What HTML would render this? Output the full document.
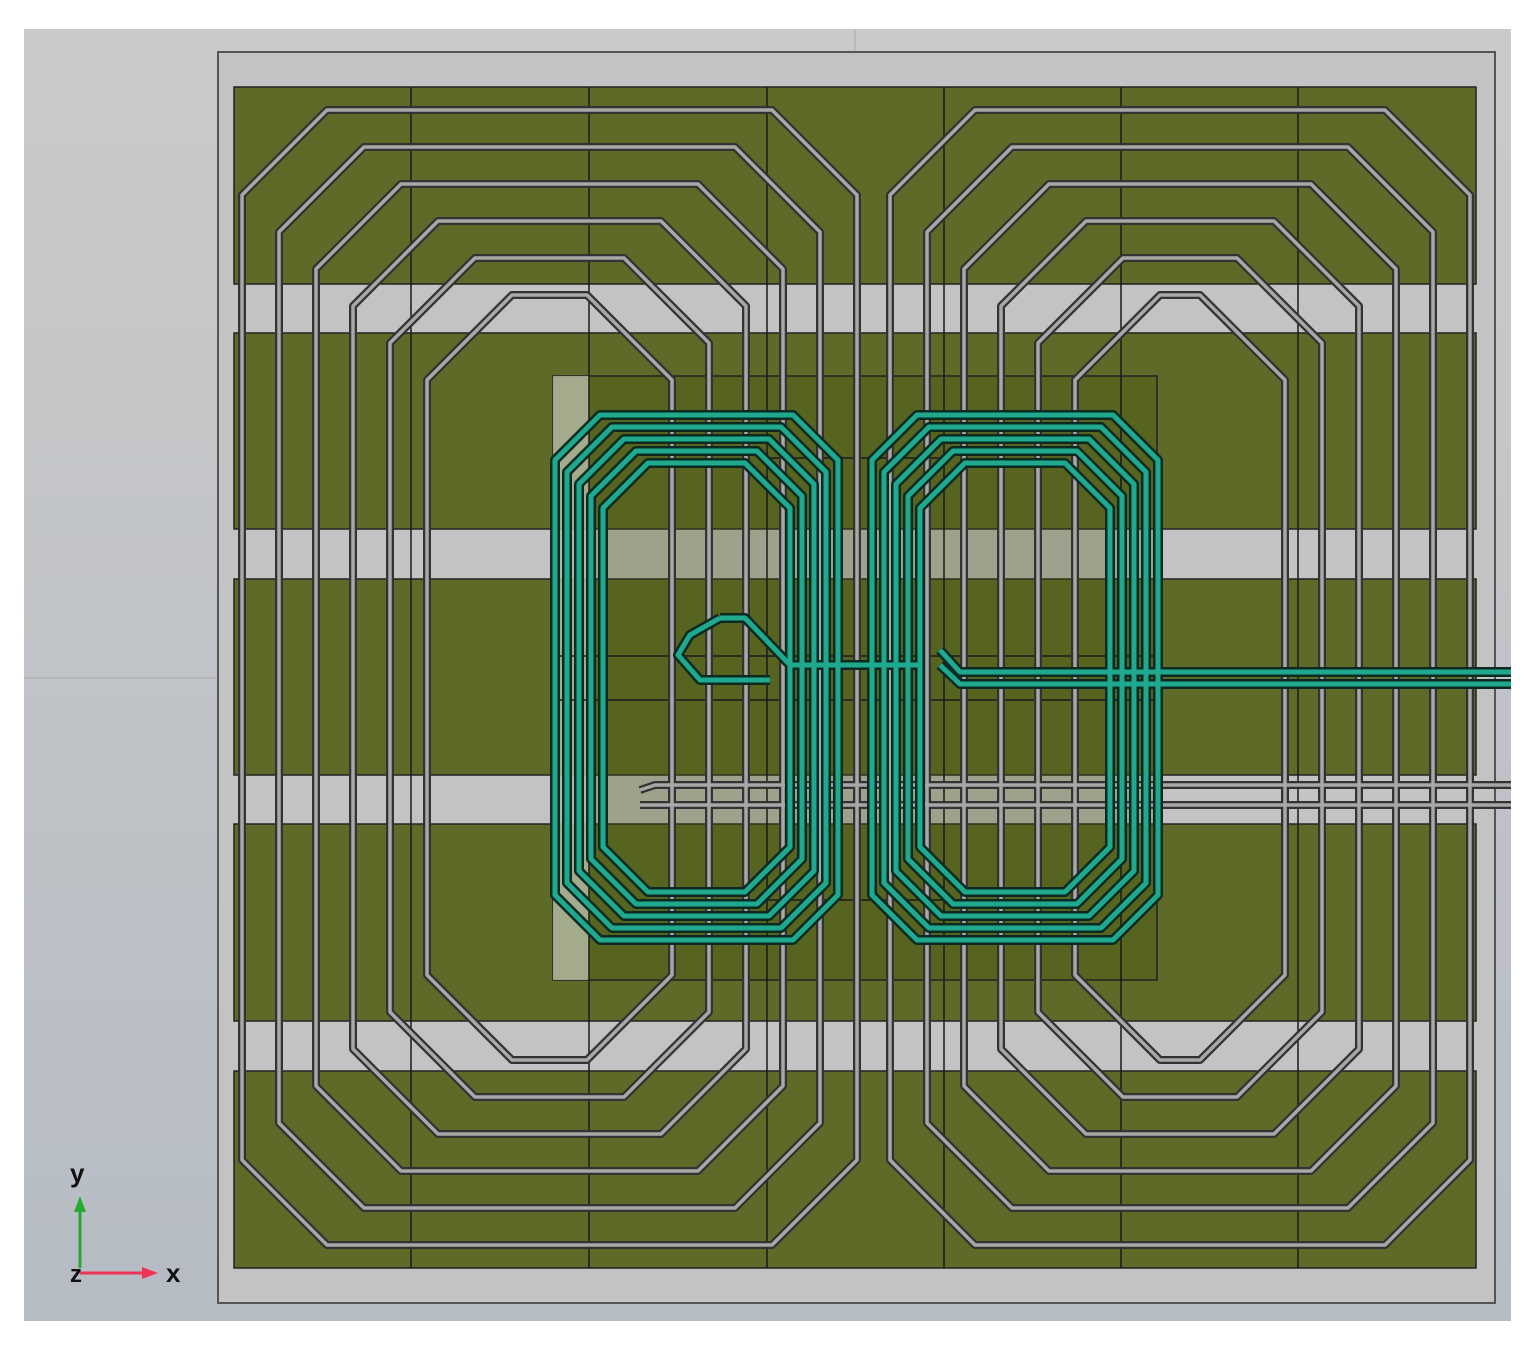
<!DOCTYPE html>
<html><head><meta charset="utf-8"><style>html,body{margin:0;padding:0;background:#fff}svg{display:block}</style></head>
<body>
<svg width="1538" height="1353" viewBox="0 0 1538 1353" xmlns="http://www.w3.org/2000/svg">
<defs>
<linearGradient id="bg" x1="0" y1="0" x2="0" y2="1"><stop offset="0" stop-color="#cacaca"/><stop offset="1" stop-color="#b6bcc4"/></linearGradient>
</defs>
<rect x="24" y="29" width="1487" height="1292" fill="url(#bg)"/>
<line x1="855" y1="29" x2="855" y2="52" stroke="#aaa"/>
<line x1="24" y1="678" x2="218" y2="678" stroke="#aaa"/>
<rect x="218" y="52" width="1277" height="1251" fill="#c3c3c3" stroke="#555" stroke-width="2"/>
<g fill="#5e6a27" stroke="#222" stroke-width="1.5">
<rect x="234" y="87" width="1242" height="197"/>
<rect x="234" y="333" width="1242" height="196"/>
<rect x="234" y="579" width="1242" height="196"/>
<rect x="234" y="824" width="1242" height="197"/>
<rect x="234" y="1071" width="1242" height="197"/>
</g>
<rect x="553" y="376" width="604" height="604" fill="#4a5712" fill-opacity="0.3" stroke="#222" stroke-width="1.5"/>
<rect x="553" y="376" width="36" height="604" fill="#b8bca8" fill-opacity="0.8"/>
<g stroke="#1a1a1a" stroke-width="1.5">
<line x1="411" y1="87" x2="411" y2="1268"/><line x1="589" y1="87" x2="589" y2="1268"/>
<line x1="767" y1="87" x2="767" y2="1268"/><line x1="944" y1="87" x2="944" y2="1268"/>
<line x1="1121" y1="87" x2="1121" y2="1268"/><line x1="1298" y1="87" x2="1298" y2="1268"/>
<line x1="553" y1="656" x2="1157" y2="656"/><line x1="553" y1="700" x2="1157" y2="700"/>
<line x1="767" y1="458" x2="944" y2="458"/><line x1="767" y1="900" x2="944" y2="900"/>
</g>
<g fill="none" stroke-linejoin="round">
<g stroke="#333" stroke-width="8">
<polygon points="327,110 772,110 857,195 857,1160 772,1245 327,1245 242,1160 242,195"/>
<polygon points="364,147 735,147 820,232 820,1123 735,1208 364,1208 279,1123 279,232"/>
<polygon points="401,184 698,184 783,269 783,1086 698,1171 401,1171 316,1086 316,269"/>
<polygon points="438,221 661,221 746,306 746,1049 661,1134 438,1134 353,1049 353,306"/>
<polygon points="475,258 624,258 709,343 709,1012 624,1097 475,1097 390,1012 390,343"/>
<polygon points="512,295 587,295 672,380 672,975 587,1060 512,1060 427,975 427,380"/>
<polygon points="975,110 1385,110 1470,195 1470,1160 1385,1245 975,1245 890,1160 890,195"/>
<polygon points="1012,147 1348,147 1433,232 1433,1123 1348,1208 1012,1208 927,1123 927,232"/>
<polygon points="1049,184 1311,184 1396,269 1396,1086 1311,1171 1049,1171 964,1086 964,269"/>
<polygon points="1086,221 1274,221 1359,306 1359,1049 1274,1134 1086,1134 1001,1049 1001,306"/>
<polygon points="1123,258 1237,258 1322,343 1322,1012 1237,1097 1123,1097 1038,1012 1038,343"/>
<polygon points="1160,295 1200,295 1285,380 1285,975 1200,1060 1160,1060 1075,975 1075,380"/>
<path d="M640,790 L655,785 L1511,785 M640,805 L1511,805"/>
</g>
<g stroke="#a8a8a8" stroke-width="3.5">
<polygon points="327,110 772,110 857,195 857,1160 772,1245 327,1245 242,1160 242,195"/>
<polygon points="364,147 735,147 820,232 820,1123 735,1208 364,1208 279,1123 279,232"/>
<polygon points="401,184 698,184 783,269 783,1086 698,1171 401,1171 316,1086 316,269"/>
<polygon points="438,221 661,221 746,306 746,1049 661,1134 438,1134 353,1049 353,306"/>
<polygon points="475,258 624,258 709,343 709,1012 624,1097 475,1097 390,1012 390,343"/>
<polygon points="512,295 587,295 672,380 672,975 587,1060 512,1060 427,975 427,380"/>
<polygon points="975,110 1385,110 1470,195 1470,1160 1385,1245 975,1245 890,1160 890,195"/>
<polygon points="1012,147 1348,147 1433,232 1433,1123 1348,1208 1012,1208 927,1123 927,232"/>
<polygon points="1049,184 1311,184 1396,269 1396,1086 1311,1171 1049,1171 964,1086 964,269"/>
<polygon points="1086,221 1274,221 1359,306 1359,1049 1274,1134 1086,1134 1001,1049 1001,306"/>
<polygon points="1123,258 1237,258 1322,343 1322,1012 1237,1097 1123,1097 1038,1012 1038,343"/>
<polygon points="1160,295 1200,295 1285,380 1285,975 1200,1060 1160,1060 1075,975 1075,380"/>
<path d="M640,790 L655,785 L1511,785 M640,805 L1511,805"/>
</g>
</g>
<g fill="none" stroke-linejoin="round">
<g stroke="#0b2a22" stroke-width="10">
<polygon points="600,415 793,415 838,460 838,895 793,940 600,940 555,895 555,460"/>
<polygon points="612,427 781,427 826,472 826,883 781,928 612,928 567,883 567,472"/>
<polygon points="624,439 769,439 814,484 814,871 769,916 624,916 579,871 579,484"/>
<polygon points="636,451 757,451 802,496 802,859 757,904 636,904 591,859 591,496"/>
<polygon points="648,463 745,463 790,508 790,847 745,892 648,892 603,847 603,508"/>
<polygon points="917,415 1113,415 1158,460 1158,895 1113,940 917,940 872,895 872,460"/>
<polygon points="929,427 1101,427 1146,472 1146,883 1101,928 929,928 884,883 884,472"/>
<polygon points="941,439 1089,439 1134,484 1134,871 1089,916 941,916 896,871 896,484"/>
<polygon points="953,451 1077,451 1122,496 1122,859 1077,904 953,904 908,859 908,496"/>
<polygon points="965,463 1065,463 1110,508 1110,847 1065,892 965,892 920,847 920,508"/>
<path d="M940,650 L960,672 L1511,672 M940,665 L960,684 L1511,684 M720,618 L745,618 L790,665 L920,665 M720,618 L690,635 L678,655 L700,680 L770,680"/>
</g>
<g stroke="#1fa98f" stroke-width="5">
<polygon points="600,415 793,415 838,460 838,895 793,940 600,940 555,895 555,460"/>
<polygon points="612,427 781,427 826,472 826,883 781,928 612,928 567,883 567,472"/>
<polygon points="624,439 769,439 814,484 814,871 769,916 624,916 579,871 579,484"/>
<polygon points="636,451 757,451 802,496 802,859 757,904 636,904 591,859 591,496"/>
<polygon points="648,463 745,463 790,508 790,847 745,892 648,892 603,847 603,508"/>
<polygon points="917,415 1113,415 1158,460 1158,895 1113,940 917,940 872,895 872,460"/>
<polygon points="929,427 1101,427 1146,472 1146,883 1101,928 929,928 884,883 884,472"/>
<polygon points="941,439 1089,439 1134,484 1134,871 1089,916 941,916 896,871 896,484"/>
<polygon points="953,451 1077,451 1122,496 1122,859 1077,904 953,904 908,859 908,496"/>
<polygon points="965,463 1065,463 1110,508 1110,847 1065,892 965,892 920,847 920,508"/>
<path d="M940,650 L960,672 L1511,672 M940,665 L960,684 L1511,684 M720,618 L745,618 L790,665 L920,665 M720,618 L690,635 L678,655 L700,680 L770,680"/>
</g>
</g>
<g>
<line x1="80" y1="1268" x2="80" y2="1205" stroke="#22aa33" stroke-width="3"/>
<polygon points="80,1196 74,1212 86,1212" fill="#22aa33"/>
<line x1="80" y1="1273" x2="145" y2="1273" stroke="#ee3355" stroke-width="3"/>
<polygon points="158,1273 142,1267 142,1279" fill="#ee3355"/>
<text x="70" y="1182" font-family="Liberation Sans, sans-serif" font-weight="bold" font-size="26" fill="#111">y</text>
<text x="70" y="1282" font-family="Liberation Sans, sans-serif" font-weight="bold" font-size="24" fill="#111">z</text>
<text x="166" y="1282" font-family="Liberation Sans, sans-serif" font-weight="bold" font-size="26" fill="#111">x</text>
</g>
</svg>
</body></html>
